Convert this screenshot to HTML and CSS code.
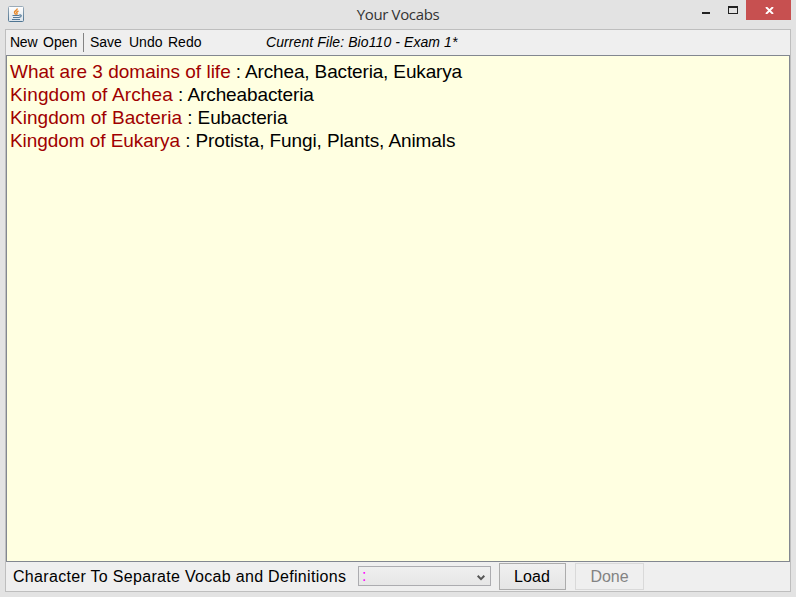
FILE: index.html
```html
<!DOCTYPE html>
<html lang="en">
<head>
<meta charset="utf-8">
<title>Your Vocabs</title>
<link rel="stylesheet" href="styles.css">
</head>
<body>
<div class="window">
  <header class="titlebar">
    <svg class="app-icon" width="16" height="16" viewBox="0 0 16 16">
      <defs><linearGradient id="tile" x1="0" y1="0" x2="0" y2="1"><stop offset="0" stop-color="#fff"/><stop offset="1" stop-color="#dbe3ea"/></linearGradient>
      <linearGradient id="rim" x1="0" y1="0" x2="0" y2="1"><stop offset="0" stop-color="#9aabb9"/><stop offset="1" stop-color="#4f7592"/></linearGradient></defs>
      <rect x=".5" y=".5" width="15" height="15" rx="1" fill="url(#tile)" stroke="url(#rim)"/>
      <path d="M9.3 2.5C9.3 4.5 6 4.8 6.5 6.5C6.8 7.5 7.6 7.8 7.5 8.8M10.5 5C8.5 5.8 8.2 6.3 9 7.2C9.4 7.8 9 8.2 8.5 8.8" fill="none" stroke="#e8892b" stroke-width="1.4"/>
      <path d="M4.5 9.5H11M5 11.5H11M4 13.5H12M11 9.2C14 8 14 11 11 11.3" fill="none" stroke="#557a99" stroke-width="1.2"/>
    </svg>
    <h1 class="title">Your Vocabs</h1>
    <div class="controls">
      <span class="minimize"></span>
      <span class="maximize"></span>
      <span class="close"><svg width="9" height="7" viewBox="0 0 9 7"><path d="M1 0L8 7M8 0L1 7" stroke="#fff" stroke-width="1.9"/></svg></span>
    </div>
  </header>
  <main class="frame">
    <nav class="toolbar">
      <span class="tool new">New</span><span class="tool open">Open</span><span class="divider"></span><span class="tool save">Save</span><span class="tool undo">Undo</span><span class="tool redo">Redo</span><em class="file">Current File: Bio110 - Exam 1*</em>
    </nav>
    <section class="editor">
      <div class="line l1"><span class="term">What are 3 domains of life</span> : Archea, Bacteria, Eukarya</div>
      <div class="line l2"><span class="term">Kingdom of Archea</span> : Archeabacteria</div>
      <div class="line l3"><span class="term">Kingdom of Bacteria</span> : Eubacteria</div>
      <div class="line l4"><span class="term">Kingdom of Eukarya</span> : Protista, Fungi, Plants, Animals</div>
    </section>
    <footer class="footer">
      <span class="label">Character To Separate Vocab and Definitions</span>
      <div class="combo"><span>:</span><svg width="8" height="6" viewBox="0 0 8 6"><path d="M.7 .8L4 4.1L7.3 .8" fill="none" stroke="#555" stroke-width="2"/></svg></div>
      <button class="btn load">Load</button>
      <button class="btn done" disabled>Done</button>
    </footer>
  </main>
</div>
</body>
</html>
```
FILE: styles.css
```css
* { box-sizing: border-box; }
body { margin: 0; background: #e3e3e3; font-family: "Liberation Sans", Arial, sans-serif; color: #000; }
.window { width: 796px; height: 597px; display: flex; flex-direction: column; padding: 0 5px 5px; overflow: hidden; }
.titlebar { height: 29px; flex: none; display: grid; grid-template-columns: 120px 1fr 120px; margin: 0 0 0 3px; }
.app-icon { margin-top: 6px; }
.title { margin: 0; padding-right: 3px; text-align: center; font: 400 15px/29px "Open Sans", sans-serif; letter-spacing: -.35px; color: #333; }
.controls { display: flex; align-items: flex-start; justify-content: flex-end; }
.minimize { width: 8px; height: 2px; margin: 12px 18px 0 0; background: #222; }
.maximize { width: 10px; height: 8px; margin: 6px 8px 0 0; border: 1px solid #222; border-top-width: 2px; }
.close { width: 45px; height: 20px; background: #c75050; display: flex; align-items: center; justify-content: center; padding: 1px 0 0 1px; }
.frame { width: 786px; height: 563px; border: 1px solid #bebebe; background: #efefef; display: flex; flex-direction: column; }
.toolbar { height: 25px; flex: none; display: flex; align-items: center; padding-left: 4px; font-size: 14px; white-space: nowrap; }
.tool, .file { padding-bottom: 2px; }
.new { width: 33px; letter-spacing: -.25px; }
.open { width: 40px; }
.divider { width: 1px; height: 19px; background: #838383; margin-right: 6px; }
.save { width: 39px; }
.undo { width: 39px; }
.redo { width: 98px; }
.file { letter-spacing: .09px; }
.editor { height: 507px; flex: none; background: #ffffe1; border: 1px solid #828790; padding: 4px 3px; font-size: 19px; line-height: 23px; white-space: nowrap; }
.line { letter-spacing: -.1px; }
.l1 { letter-spacing: -.15px; }
.term { color: #a00000; letter-spacing: 0; }
.l2 .term { letter-spacing: .14px; }
.l3 .term { letter-spacing: .05px; }
.l4 .term { letter-spacing: -.06px; }
.footer { flex: 1; display: flex; align-items: center; padding-left: 7px; font-size: 16px; white-space: nowrap; }
.label { width: 345px; letter-spacing: .31px; }
.combo { width: 133px; height: 20px; border: 1px solid #acacb0; background: linear-gradient(#efefef, #e6e6e6); display: flex; align-items: center; justify-content: space-between; padding: 0 5px 0 3px; color: #f0f; margin: 0 8px 1px 0; }
.combo svg { margin-top: 4px; }
.btn { font: 16px "Liberation Sans", Arial, sans-serif; height: 27px; padding: 0; border: 1px solid #acacac; background: linear-gradient(#f0f0f0, #e5e5e5); color: #000; }
.load { width: 67px; margin-right: 9px; padding-right: 1px; letter-spacing: .1px; }
.done { width: 69px; background: #efefef; border-color: #d9d9d9; color: #838383; }
```
